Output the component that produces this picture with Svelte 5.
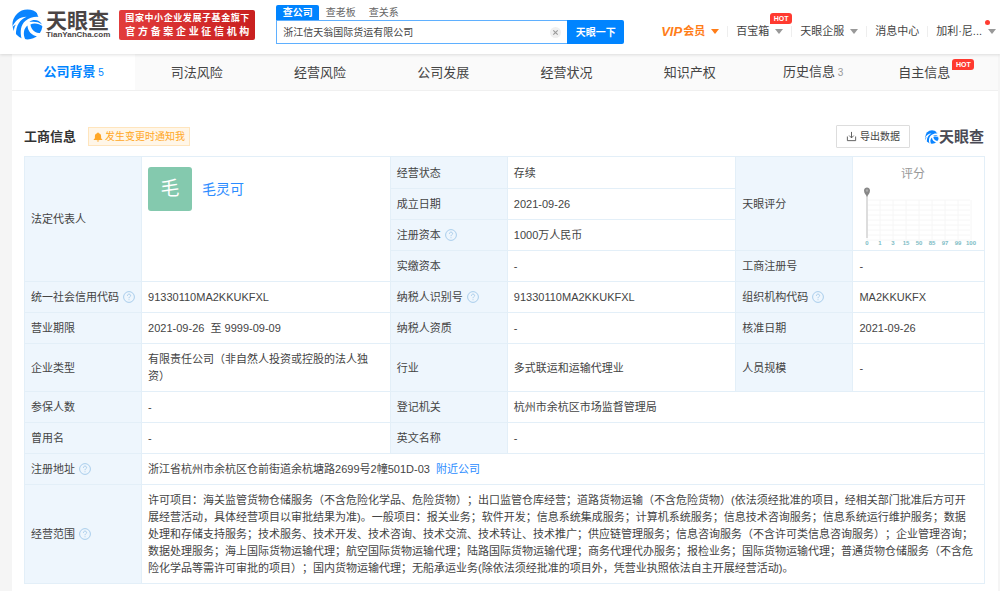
<script lang="ts">
  type Tab = { name: string; count?: number; hot?: boolean };

  const searchTypes = ["查公司", "查老板", "查关系"];
  const tabs: Tab[] = [
    { name: "公司背景", count: 5 },
    { name: "司法风险" },
    { name: "经营风险" },
    { name: "公司发展" },
    { name: "经营状况" },
    { name: "知识产权" },
    { name: "历史信息", count: 3 },
    { name: "自主信息", hot: true },
  ];
  const scoreMarks = [0, 1, 3, 15, 50, 85, 97, 99, 100];

  const scope =
    "许可项目：海关监管货物仓储服务（不含危险化学品、危险货物）；出口监管仓库经营；道路货物运输（不含危险货物）(依法须经批准的项目，经相关部门批准后方可开展经营活动，具体经营项目以审批结果为准)。一般项目：报关业务；软件开发；信息系统集成服务；计算机系统服务；信息技术咨询服务；信息系统运行维护服务；数据处理和存储支持服务；技术服务、技术开发、技术咨询、技术交流、技术转让、技术推广；供应链管理服务；信息咨询服务（不含许可类信息咨询服务）；企业管理咨询；数据处理服务；海上国际货物运输代理；航空国际货物运输代理；陆路国际货物运输代理；商务代理代办服务；报检业务；国际货物运输代理；普通货物仓储服务（不含危险化学品等需许可审批的项目）；国内货物运输代理；无船承运业务(除依法须经批准的项目外，凭营业执照依法自主开展经营活动)。";

  let keyword = $state("浙江信天翁国际货运有限公司");
  let searchType = $state("查公司");
  let activeTab = $state("公司背景");
</script>

{#snippet mark()}
  <svg class="mark" viewBox="0 0 32 32" aria-hidden="true">
    <circle cx="16" cy="16" r="15.5" fill="#0a84ff" />
    <path d="M32 9C26 7 19 8 14 12C9 16 8 23 10 31L14 32C11 26 12 20 16 17C16 22 20 28 27 28L30 25C24 25 20 22 19 16C23 14 28 15 32 18Z" fill="#fff" />
    <path d="M0 19C3 12 8 8 15 8C8 11 4 17 4 27L2 24C2 21 2 19 4 16C2 17 1 18 0 19Z" fill="#fff" />
    <path d="M18 13.5C22 10 28 11 31 16C27 13 23 13 18 13.5Z" fill="#0a84ff" />
    <path d="M25 2C28 3 30 6 31 9L27 8Z" fill="#fff" />
  </svg>
{/snippet}

{#snippet help()}
  <svg class="help" viewBox="0 0 12 12" aria-hidden="true">
    <circle cx="6" cy="6" r="5.4" />
    <path d="M4.4 4.8C4.4 2.5 7.7 2.6 7.6 4.7C7.5 5.8 6 5.9 6 7.2M6 8.3V9.2" />
  </svg>
{/snippet}

<header>
  <a class="logo" href="#home">
    {@render mark()}
    <span class="logoText">
      <strong>天眼查</strong>
      <small>TianYanCha.com</small>
    </span>
  </a>
  <div class="slogan">
    <span>国家中小企业发展子基金旗下</span>
    <span class="wide">官方备案企业征信机构</span>
  </div>

  <form class="search" onsubmit={(e) => e.preventDefault()}>
    <div class="types">
      {#each searchTypes as type}
        <button type="button" class:active={searchType === type} onclick={() => (searchType = type)}>{type}</button>
      {/each}
    </div>
    <div class="searchRow">
      <div class="field">
        <input type="text" aria-label="搜索" bind:value={keyword} />
        <button type="button" class="clear" aria-label="清除" onclick={() => (keyword = "")}>
          <svg viewBox="0 0 10 10"><path d="M3 3L7 7M7 3L3 7" /></svg>
        </button>
      </div>
      <button class="submit">天眼一下</button>
    </div>
  </form>

  <nav class="userNav">
    <a class="vip" href="#vip"><em>VIP</em>会员<i class="caret"></i></a>
    <a href="#box">百宝箱<i class="caret"></i><span class="hot">HOT</span></a>
    <a href="#service">天眼企服<i class="caret"></i></a>
    <a href="#message">消息中心</a>
    <a class="user" href="#user">加利·尼...<i class="caret"></i><span class="dot"></span></a>
  </nav>
</header>

<main>
  <nav class="tabs">
    {#each tabs as tab}
      <button class:active={activeTab === tab.name} class:withHot={tab.hot} onclick={() => (activeTab = tab.name)}>
        <span class="tabName">
          {tab.name}
          {#if tab.count}<small>{tab.count}</small>{/if}
          {#if tab.hot}<span class="hot">HOT</span>{/if}
        </span>
      </button>
    {/each}
  </nav>

  <section>
    <div class="heading">
      <h2>工商信息</h2>
      <button class="notify">
        <svg viewBox="0 0 10 10" aria-hidden="true">
          <path d="M5 0.5C5.6 0.5 5.8 0.8 5.9 1.2C7.4 1.6 8.1 2.7 8.1 4.2V6.3L9.3 7.5V8H0.7V7.5L1.9 6.3V4.2C1.9 2.7 2.6 1.6 4.1 1.2C4.2 0.8 4.4 0.5 5 0.5ZM3.8 8.5H6.2C6.1 9.8 3.9 9.8 3.8 8.5Z" />
        </svg>
        发生变更时通知我
      </button>
      <button class="export">
        <svg viewBox="0 0 12 12" aria-hidden="true"><path d="M6 1V7.5M3.5 5L6 7.5L8.5 5M1.5 6V10.5H10.5V6" /></svg>
        导出数据
      </button>
      <span class="brand">{@render mark()}<strong>天眼查</strong></span>
    </div>

    <table>
      <colgroup>
        <col class="label" />
        <col class="wide" />
        <col class="label" />
        <col class="middle" />
        <col class="label" />
        <col />
      </colgroup>
      <tbody>
        <tr class="first">
          <th scope="row" rowspan="4">法定代表人</th>
          <td rowspan="4" class="person">
            <div class="legal"><span class="avatar">毛</span><a href="#person">毛灵可</a></div>
          </td>
          <th scope="row">经营状态</th>
          <td>存续</td>
          <th scope="row" rowspan="3">天眼评分</th>
          <td rowspan="3" class="score">
            <svg viewBox="0 0 120 80" role="img" aria-label="评分">
              <text class="scoreTitle" x="54" y="12">评分</text>
              <g class="grid">
                {#each [0, 1, 2, 3, 4, 5, 6, 7, 8] as i}
                  <path d="M8 {34 + i * 5}H111M{8 + i * 13} 34V74" />
                {/each}
              </g>
              <path d="M8 27V72" stroke="#ddd" stroke-width="2" />
              <path d="M5 24.5C5 20.5 11 20.5 11 24.5C11 27.5 9 28.5 8 31C7 28.5 5 27.5 5 24.5Z" fill="#888" />
              <circle cx="8" cy="24.5" r="1.2" fill="#aaa" />
              {#each scoreMarks as mark, i}
                <text class="scoreMark" x={8 + i * 13} y="79">{mark}</text>
              {/each}
            </svg>
          </td>
        </tr>
        <tr>
          <th scope="row">成立日期</th>
          <td>2021-09-26</td>
        </tr>
        <tr>
          <th scope="row">注册资本{@render help()}</th>
          <td>1000万人民币</td>
        </tr>
        <tr>
          <th scope="row">实缴资本</th>
          <td>-</td>
          <th scope="row">工商注册号</th>
          <td>-</td>
        </tr>
        <tr>
          <th scope="row">统一社会信用代码{@render help()}</th>
          <td>91330110MA2KKUKFXL</td>
          <th scope="row">纳税人识别号{@render help()}</th>
          <td>91330110MA2KKUKFXL</td>
          <th scope="row">组织机构代码{@render help()}</th>
          <td>MA2KKUKFX</td>
        </tr>
        <tr>
          <th scope="row">营业期限</th>
          <td>2021-09-26 &nbsp;至 9999-09-09</td>
          <th scope="row">纳税人资质</th>
          <td>-</td>
          <th scope="row">核准日期</th>
          <td>2021-09-26</td>
        </tr>
        <tr>
          <th scope="row">企业类型</th>
          <td>有限责任公司（非自然人投资或控股的法人独资）</td>
          <th scope="row">行业</th>
          <td>多式联运和运输代理业</td>
          <th scope="row">人员规模</th>
          <td>-</td>
        </tr>
        <tr>
          <th scope="row">参保人数</th>
          <td>-</td>
          <th scope="row">登记机关</th>
          <td colspan="3">杭州市余杭区市场监督管理局</td>
        </tr>
        <tr>
          <th scope="row">曾用名</th>
          <td>-</td>
          <th scope="row">英文名称</th>
          <td colspan="3">-</td>
        </tr>
        <tr>
          <th scope="row">注册地址{@render help()}</th>
          <td colspan="5">浙江省杭州市余杭区仓前街道余杭塘路2699号2幢501D-03 <a class="nearby" href="#nearby">附近公司</a></td>
        </tr>
        <tr>
          <th scope="row">经营范围{@render help()}</th>
          <td colspan="5">{scope}</td>
        </tr>
      </tbody>
    </table>
  </section>
</main>

<style>
  :global(body) {
    margin: 0;
    background: #f5f5f5;
    color: #444;
    font: 11px/17px "Liberation Sans", "Noto Sans CJK SC", sans-serif;
    text-spacing-trim: space-all;
  }
  a {
    color: inherit;
    text-decoration: none;
  }
  button,
  input {
    font: inherit;
    color: inherit;
    border: 0;
    padding: 0;
    background: none;
  }
  button {
    cursor: pointer;
  }

  header {
    position: relative;
    display: flex;
    align-items: center;
    height: 54px;
    padding: 0 4px 0 12px;
    box-sizing: border-box;
    background: #fff;
    box-shadow: 0 1px 3px rgba(0, 0, 0, 0.12);
  }
  .logo {
    display: flex;
    align-items: center;
    gap: 3px;
    margin-bottom: 5px;
    color: #4a4444;
  }
  .mark {
    width: 31px;
    height: 31px;
    flex: none;
  }
  .logoText {
    display: flex;
    flex-direction: column;
  }
  .logoText strong {
    font-size: 21px;
    line-height: 21px;
  }
  .logoText small {
    font-size: 8px;
    line-height: 8px;
    font-weight: bold;
  }
  .slogan {
    display: flex;
    flex-direction: column;
    width: 124px;
    margin: 0 21px 5px 9px;
    padding: 2px 6px;
    border-radius: 2px;
    background: linear-gradient(90deg, #e23c3c, #c9201f);
    color: #fff;
    font-size: 9px;
    line-height: 13px;
    font-weight: bold;
  }
  .slogan span {
    text-align-last: justify;
  }
  .slogan .wide {
    font-size: 10px;
  }

  .search {
    width: 348px;
    margin-bottom: 5px;
    font-size: 10px;
  }
  .types {
    display: flex;
  }
  .types button {
    width: 43px;
    height: 15px;
    line-height: 15px;
    color: #666;
    border-radius: 2px 2px 0 0;
  }
  .types button.active {
    background: #0084ff;
    color: #fff;
    font-weight: bold;
  }
  .searchRow {
    display: flex;
    height: 24px;
  }
  .field {
    display: flex;
    align-items: center;
    flex: 1;
    border: 1px solid #5fb0ff;
    border-right: 0;
    padding: 0 6px;
  }
  .field input {
    flex: 1;
    min-width: 0;
    outline: none;
  }
  .clear {
    width: 11px;
    height: 11px;
    border-radius: 50%;
    background: #f0f0f0;
    line-height: 0;
  }
  .clear svg {
    width: 11px;
    height: 11px;
    fill: none;
    stroke: #999;
  }
  .submit {
    width: 57px;
    background: #0084ff;
    color: #fff;
    font-weight: bold;
    border-radius: 0 2px 2px 0;
  }

  .userNav {
    display: flex;
    margin-left: auto;
    padding-top: 9px;
    white-space: nowrap;
  }
  .userNav a {
    position: relative;
    display: flex;
    align-items: center;
    padding: 0 8px;
  }
  .userNav a + a::before {
    content: "";
    height: 11px;
    margin: 0 8px 0 -8px;
    border-left: 1px solid #eee;
  }
  .userNav a:last-child {
    padding-right: 0;
  }
  .userNav .vip {
    color: #ff7d18;
    font-weight: bold;
  }
  .vip em {
    margin-right: 1px;
    font-size: 13px;
  }
  .caret {
    margin-left: 6px;
    border: 4px solid transparent;
    border-top: 5px solid #999;
    border-bottom: 0;
  }
  .vip .caret {
    border-top-color: #ff7d18;
  }
  .dot {
    position: absolute;
    top: -3px;
    right: 6px;
    width: 5px;
    height: 5px;
    border-radius: 50%;
    background: #ff3b30;
  }
  .hot {
    position: absolute;
    width: 22px;
    height: 11px;
    border-radius: 3px 3px 3px 0;
    background: #ff3a30;
    color: #fff;
    font-size: 7px;
    line-height: 11px;
    font-weight: bold;
    text-align: center;
  }
  .userNav .hot {
    top: -10px;
    right: -1px;
  }

  main {
    min-height: calc(100vh - 54px);
    margin: 0 2px 0 12px;
    background: #fff;
  }
  .tabs {
    display: grid;
    grid-template-columns: repeat(8, 1fr);
    background: #fafafa;
    border-bottom: 1px solid #f0f0f0;
  }
  .tabs button {
    height: 36px;
    font-size: 13px;
  }
  .tabs button.active {
    background: #fff;
    color: #0084ff;
    font-weight: bold;
  }
  .tabs .withHot {
    padding-right: 24px;
  }
  .tabName {
    position: relative;
  }
  .tabs small {
    margin-left: -1px;
    font-size: 10px;
    font-weight: normal;
    color: #999;
  }
  .tabs .active small {
    color: inherit;
  }
  .tabs .hot {
    left: 100%;
    top: -6px;
    margin-left: 2px;
  }

  section {
    padding: 34px 13px 6px 12px;
  }
  .heading {
    display: flex;
    align-items: center;
    margin-bottom: 8px;
  }
  h2 {
    margin: 0 12px 0 0;
    color: #333;
    font-size: 13px;
  }
  .notify {
    display: flex;
    align-items: center;
    gap: 2px;
    height: 19px;
    box-sizing: border-box;
    padding: 0 4px;
    border: 1px solid #ffe5bd;
    background: #fff6e8;
    color: #ffa726;
    font-size: 10px;
  }
  .notify svg {
    width: 10px;
    height: 10px;
    fill: currentColor;
  }
  .export {
    display: flex;
    align-items: center;
    gap: 3px;
    height: 23px;
    box-sizing: border-box;
    margin: 0 15px 0 auto;
    padding: 0 9px;
    border: 1px solid #ddd;
    border-radius: 1px;
    font-size: 10px;
  }
  .export svg {
    width: 11px;
    height: 11px;
    fill: none;
    stroke: #555;
  }
  .brand {
    display: flex;
    align-items: center;
    margin-right: 1px;
    color: #4a4a55;
    font-size: 15px;
  }
  .brand .mark {
    width: 14px;
    height: 14px;
  }

  table {
    width: 100%;
    table-layout: fixed;
    border-collapse: collapse;
  }
  col.label {
    width: 12.2%;
  }
  col.wide {
    width: 25.9%;
  }
  col.middle {
    width: 23.8%;
  }
  .first {
    height: 32px;
  }
  th,
  td {
    padding: 7px 8px 6px 6px;
    border: 1px solid #e3eff8;
    text-align: left;
    font-weight: normal;
  }
  th {
    padding-right: 0;
    background: #eef6fd;
    white-space: nowrap;
  }
  td a {
    color: #2b8cff;
  }
  .nearby {
    margin-left: 3px;
  }
  .help {
    width: 12px;
    height: 12px;
    margin-left: 4px;
    vertical-align: -2px;
    fill: none;
    stroke: #a9cdeb;
  }
  td.person {
    padding-top: 10px;
    vertical-align: top;
  }
  .legal {
    display: flex;
    align-items: center;
    gap: 10px;
    font-size: 14px;
  }
  .avatar {
    width: 44px;
    border-radius: 3px;
    background: #84c9ae;
    color: #fff;
    font-size: 19px;
    line-height: 44px;
    text-align: center;
  }
  td.score {
    padding: 4px 6px 0;
  }
  .score svg {
    display: block;
    width: 120px;
    height: 80px;
  }
  .scoreTitle {
    fill: #999;
    font-size: 12px;
    text-anchor: middle;
  }
  .scoreMark {
    fill: #7dbcc4;
    font-size: 6px;
    font-weight: bold;
    text-anchor: middle;
  }
  .grid {
    stroke: #f6f6f6;
  }
</style>
